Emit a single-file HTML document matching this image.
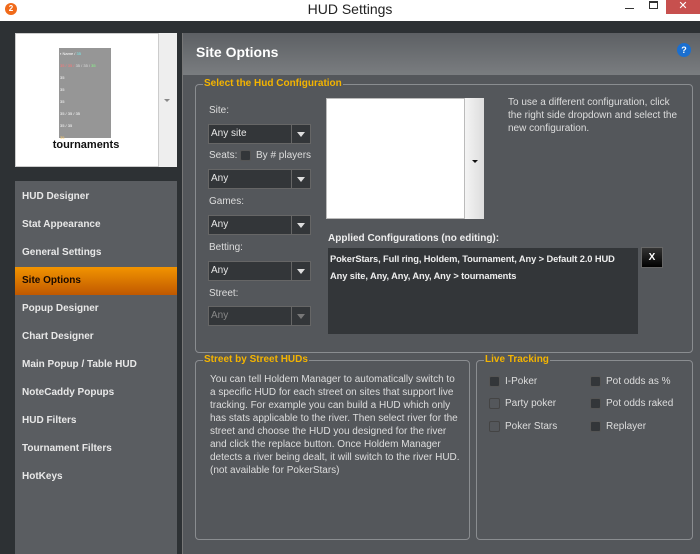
<!DOCTYPE html>
<html><head><style>
*{margin:0;padding:0;box-sizing:border-box}
body{width:700px;height:554px;overflow:hidden;background:#2d3134;font-family:"Liberation Sans",sans-serif;position:relative;font-size:10px;color:#ddd}
.a{position:absolute}
.title{left:0;top:0;width:700px;height:21px;background:#fff;color:#222;font-size:14px;text-align:center;line-height:19px}
.nav{left:15px;top:181px;width:162px;height:373px;background:#5a5d61}
.nav div{height:28px;line-height:28px;padding-left:7px;font-weight:bold;color:#e8e8e8;font-size:10px}
.nav .sel{background:linear-gradient(#f29400,#c05800);color:#1a0a00}
.main{left:182px;top:33px;width:518px;height:521px;background:#54575b;border-left:1px solid #777}
.hdr{left:0;top:0;width:518px;height:42px;background:linear-gradient(#5d6064,#7a7d80);}
.box{border:1px solid #8a8d90;border-radius:4px}
.leg{background:#54575b;color:#f4b400;font-weight:bold;font-size:10px;padding:0 1px;position:absolute;top:-7px;left:7px;line-height:12px}
.dd{width:103px;height:20px;background:#333639;border:1px solid #666;color:#e8e8e8;font-size:10px;line-height:18px;padding-left:2px}
.dd:after{content:"";position:absolute;right:0;top:0;width:18px;height:18px;border-left:1px solid #666}
.dd i{position:absolute;right:5px;top:7px;border:4px solid transparent;border-top:5px solid #ddd;border-bottom:0}
.lbl{color:#ddd;font-size:10px}
.cb{width:11px;height:11px;background:#333639;border:1px solid #555;border-radius:2px}
.cb2{width:11px;height:11px;background:#54575b;border:1px solid #444;border-radius:2px}
</style></head><body>
<div class="a title">HUD Settings</div>
<div class="a" style="left:5px;top:3px;width:12px;height:12px;border-radius:50%;background:#f06a1a;color:#fff;font-size:8px;font-weight:bold;text-align:center;line-height:12px">2</div>
<div class="a" style="left:625px;top:8px;width:9px;height:1px;background:#333"></div>
<div class="a" style="left:649px;top:1px;width:9px;height:8px;border:1px solid #333;border-top-width:2px"></div>
<div class="a" style="left:666px;top:0;width:34px;height:14px;background:#c7504e;color:#fff;text-align:center;font-size:11px;line-height:12px">✕</div>
<div class="a" style="left:15px;top:33px;width:162px;height:134px;background:#fff;border:1px solid #ccc"></div>
<div class="a" style="left:158px;top:33px;width:19px;height:134px;background:#eee;border-left:1px solid #ccc"></div>
<div class="a" style="left:164px;top:99px;border:3px solid transparent;border-top:3px solid #888"></div>
<div class="a" style="left:59px;top:48px;width:52px;height:90px;background:#969696;font-size:4px;color:#fff;line-height:12px;padding-left:1px">
<div style="color:#fff">▪ Name / <span style="color:#7ee">35</span></div><div style="color:#f77">35 / 35 / <span style="color:#ddd">35 / 35 /</span> <span style="color:#8f8">35</span></div><div>35</div><div>35</div><div>35</div><div>35 / 35 / 35</div><div>35 / 35</div><div style="color:#fc6">35</div></div>
<div class="a" style="left:15px;top:139px;width:142px;text-align:center;color:#111;font-weight:bold;font-size:11px">tournaments</div>
<div class="a nav"><div style="margin-top:2px">HUD Designer</div><div>Stat Appearance</div><div>General Settings</div><div class="sel">Site Options</div><div>Popup Designer</div><div>Chart Designer</div><div>Main Popup / Table HUD</div><div>NoteCaddy Popups</div><div>HUD Filters</div><div>Tournament Filters</div><div>HotKeys</div></div>
<div class="a main">
<div class="a hdr"></div>
<div class="a" style="left:13px;top:11px;font-size:14px;font-weight:bold;color:#fff">Site Options</div>
<div class="a" style="left:494px;top:10px;width:14px;height:14px;border-radius:50%;background:#1a6fd0;color:#fff;font-size:9px;font-weight:bold;text-align:center;line-height:14px">?</div>
<div class="a box" style="left:12px;top:51px;width:498px;height:269px"><span class="leg">Select the Hud Configuration</span></div>
<div class="a lbl" style="left:26px;top:72px">Site:</div>
<div class="a dd" style="left:25px;top:91px">Any site<i></i></div>
<div class="a lbl" style="left:26px;top:117px">Seats:</div>
<div class="a cb" style="left:57px;top:117px"></div>
<div class="a lbl" style="left:73px;top:117px">By # players</div>
<div class="a dd" style="left:25px;top:136px">Any<i></i></div>
<div class="a lbl" style="left:26px;top:163px">Games:</div>
<div class="a dd" style="left:25px;top:182px">Any<i></i></div>
<div class="a lbl" style="left:26px;top:209px">Betting:</div>
<div class="a dd" style="left:25px;top:228px">Any<i></i></div>
<div class="a lbl" style="left:26px;top:255px">Street:</div>
<div class="a dd" style="left:25px;top:273px;color:#888">Any<i style="border-top-color:#777"></i></div>
<div class="a" style="left:143px;top:65px;width:158px;height:121px;background:#fff;border:1px solid #bbb"></div>
<div class="a" style="left:281px;top:65px;width:20px;height:121px;background:linear-gradient(90deg,#f4f4f4,#ddd);border-left:1px solid #bbb"></div>
<div class="a" style="left:289px;top:127px;border:3px solid transparent;border-top:3px solid #111"></div>
<div class="a lbl" style="left:325px;top:63px;line-height:13px;width:170px">To use a different configuration, click the right side dropdown and select the new configuration.</div>
<div class="a" style="left:145px;top:200px;color:#eee;font-weight:bold">Applied Configurations (no editing):</div>
<div class="a" style="left:145px;top:215px;width:310px;height:86px;background:#333639;color:#eee;font-weight:bold;padding:3px 2px;line-height:17px;font-size:9.3px;white-space:nowrap;letter-spacing:-0.1px">PokerStars, Full ring, Holdem, Tournament, Any &gt; Default 2.0 HUD<br>Any site, Any, Any, Any, Any &gt; tournaments</div>
<div class="a" style="left:458px;top:214px;width:22px;height:21px;background:linear-gradient(#333,#000);border:1px solid #666;color:#fff;font-weight:bold;text-align:center;line-height:19px">X</div>
<div class="a box" style="left:12px;top:327px;width:275px;height:180px"><span class="leg">Street by Street HUDs</span></div>
<div class="a lbl" style="left:27px;top:340px;width:250px;line-height:13px">You can tell Holdem Manager to automatically switch to a specific HUD for each street on sites that support live tracking. For example you can build a HUD which only has stats applicable to the river. Then select river for the street and choose the HUD you designed for the river and click the replace button. Once Holdem Manager detects a river being dealt, it will switch to the river HUD. (not available for PokerStars)</div>
<div class="a box" style="left:293px;top:327px;width:217px;height:180px"><span class="leg">Live Tracking</span></div>
<div class="a cb" style="left:306px;top:343px"></div><div class="a lbl" style="left:322px;top:343px">I-Poker</div>
<div class="a cb2" style="left:306px;top:365px"></div><div class="a lbl" style="left:322px;top:365px">Party poker</div>
<div class="a cb2" style="left:306px;top:388px"></div><div class="a lbl" style="left:322px;top:388px">Poker Stars</div>
<div class="a cb" style="left:407px;top:343px"></div><div class="a lbl" style="left:423px;top:343px">Pot odds as %</div>
<div class="a cb" style="left:407px;top:365px"></div><div class="a lbl" style="left:423px;top:365px">Pot odds raked</div>
<div class="a cb" style="left:407px;top:388px"></div><div class="a lbl" style="left:423px;top:388px">Replayer</div>
</div>
</body></html>
